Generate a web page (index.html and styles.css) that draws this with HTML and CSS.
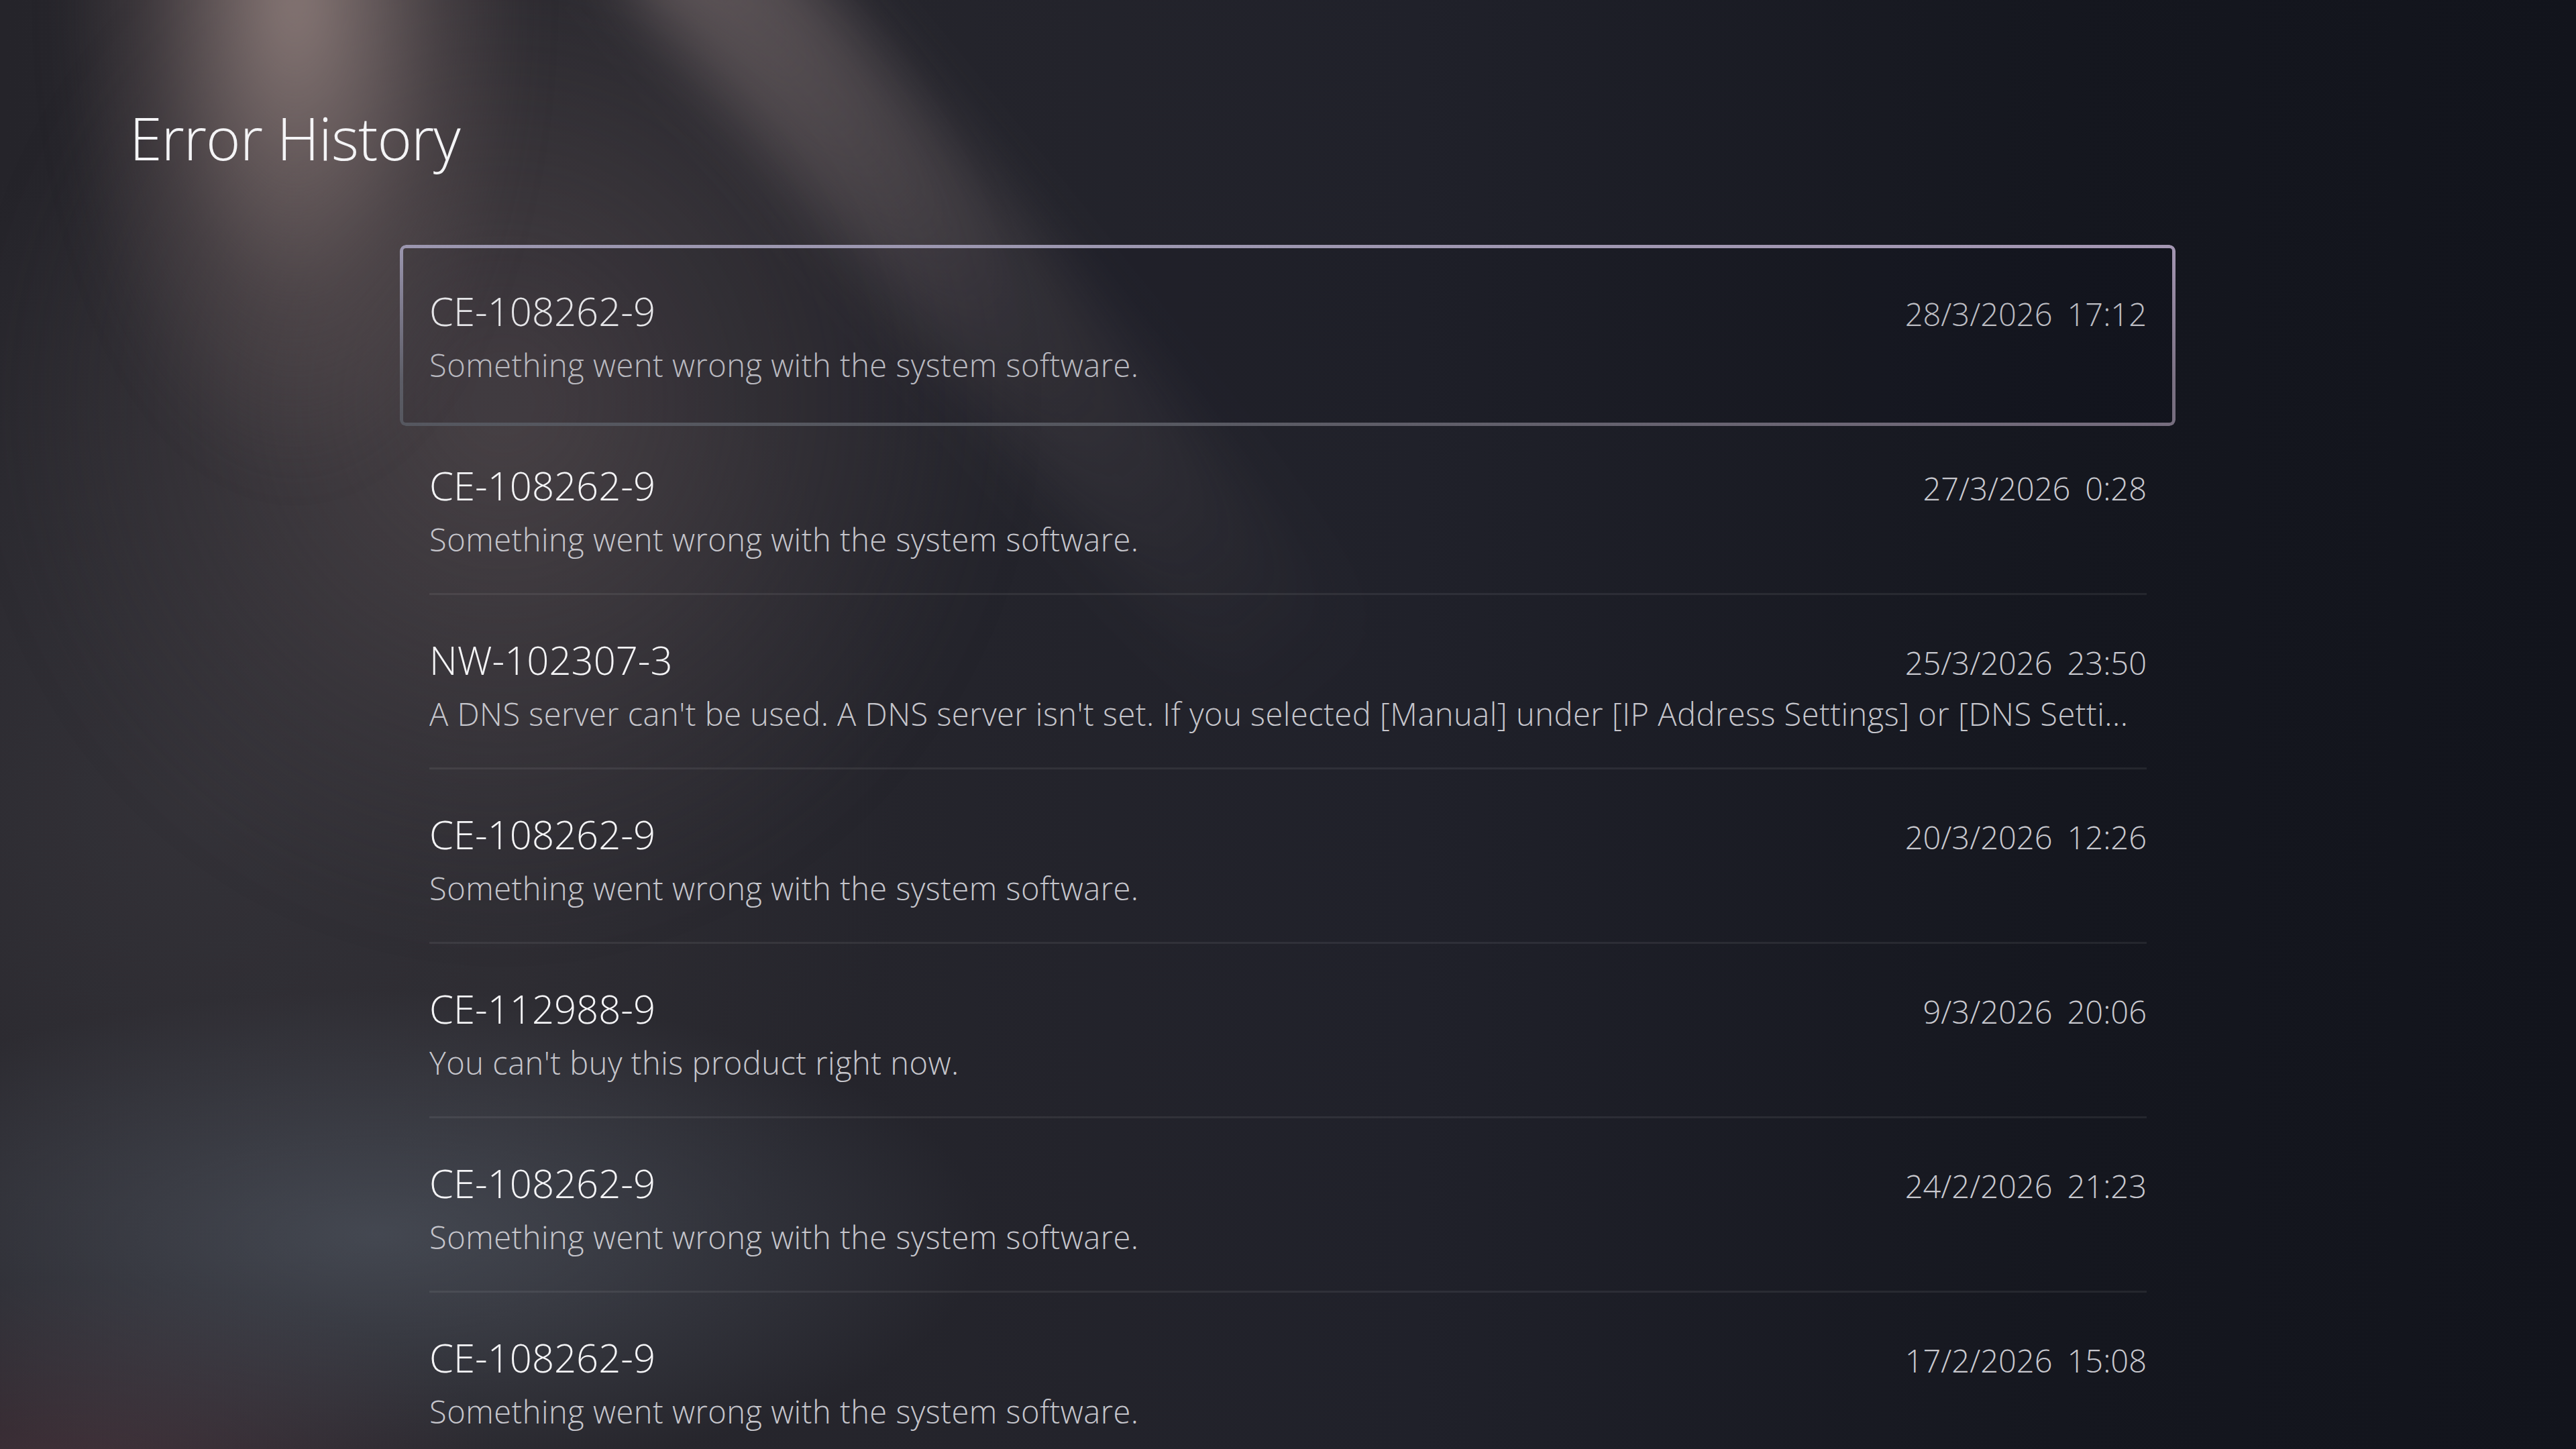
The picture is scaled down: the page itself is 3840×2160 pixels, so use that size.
FILE: index.html
```html
<!DOCTYPE html>
<html lang="en">
<head>
    <meta charset="UTF-8">
    <meta name="viewport" content="width=device-width, initial-scale=1.0">
    <title>Error History</title>
    <link rel="stylesheet" href="styles.css">
</head>
<body>
    <div class="backdrop">
        <span class="beam beam-wide"></span>
        <span class="beam beam-main"></span>
        <span class="beam beam-streak"></span>
    </div>
    <header>
        <h1>Error History</h1>
    </header>
    <main>
        <ul class="error-list">
            <li class="error-item focused">
                <div class="error-body">
                    <div class="error-head">
                        <span class="error-code">CE-108262-9</span>
                        <span class="error-date">28/3/2026<span class="time">17:12</span></span>
                    </div>
                    <p class="error-text">Something went wrong with the system software.</p>
                </div>
            </li>
            <li class="error-item">
                <div class="error-body">
                    <div class="error-head">
                        <span class="error-code">CE-108262-9</span>
                        <span class="error-date">27/3/2026<span class="time">0:28</span></span>
                    </div>
                    <p class="error-text">Something went wrong with the system software.</p>
                </div>
            </li>
            <li class="error-item">
                <div class="error-body">
                    <div class="error-head">
                        <span class="error-code">NW-102307-3</span>
                        <span class="error-date">25/3/2026<span class="time">23:50</span></span>
                    </div>
                    <p class="error-text">A DNS server can't be used. A DNS server isn't set. If you selected [Manual] under [IP Address Settings] or [DNS Setti...</p>
                </div>
            </li>
            <li class="error-item">
                <div class="error-body">
                    <div class="error-head">
                        <span class="error-code">CE-108262-9</span>
                        <span class="error-date">20/3/2026<span class="time">12:26</span></span>
                    </div>
                    <p class="error-text">Something went wrong with the system software.</p>
                </div>
            </li>
            <li class="error-item">
                <div class="error-body">
                    <div class="error-head">
                        <span class="error-code">CE-112988-9</span>
                        <span class="error-date">9/3/2026<span class="time">20:06</span></span>
                    </div>
                    <p class="error-text">You can't buy this product right now.</p>
                </div>
            </li>
            <li class="error-item">
                <div class="error-body">
                    <div class="error-head">
                        <span class="error-code">CE-108262-9</span>
                        <span class="error-date">24/2/2026<span class="time">21:23</span></span>
                    </div>
                    <p class="error-text">Something went wrong with the system software.</p>
                </div>
            </li>
            <li class="error-item">
                <div class="error-body">
                    <div class="error-head">
                        <span class="error-code">CE-108262-9</span>
                        <span class="error-date">17/2/2026<span class="time">15:08</span></span>
                    </div>
                    <p class="error-text">Something went wrong with the system software.</p>
                </div>
            </li>
        </ul>
    </main>
</body>
</html>
```

FILE: styles.css
```css
/* General Styles */
html, body {
    margin: 0;
    padding: 0;
    height: 100%;
}

body {
    position: relative;
    overflow: hidden;
    font-family: 'Open Sans', 'Noto Sans', sans-serif;
    font-weight: 300;
    color: #f2f2f4;
    background:
        radial-gradient(ellipse 1300px 520px at 560px 1840px, rgba(88, 96, 108, 0.55), transparent 70%),
        radial-gradient(ellipse 900px 420px at 120px 2200px, rgba(92, 62, 72, 0.5), transparent 70%),
        radial-gradient(ellipse 1400px 1300px at 300px 1200px, rgba(62, 60, 66, 0.55), transparent 75%),
        linear-gradient(to right, #25242a 0%, #28272d 20%, #20212a 55%, #15171f 80%, #12141c 100%);
}

/* Light beams behind the content */
.backdrop {
    position: absolute;
    inset: 0;
    pointer-events: none;
    overflow: hidden;
}

.beam {
    position: absolute;
    display: block;
}

.beam-main {
    left: 0;
    top: -500px;
    width: 880px;
    height: 1800px;
    background: radial-gradient(ellipse 50% 50% at 50% 28%, rgba(160, 140, 136, 0.8), rgba(120, 104, 104, 0.3) 50%, transparent 80%);
    filter: blur(30px);
}

.beam-wide {
    left: -200px;
    top: -300px;
    width: 1900px;
    height: 2000px;
    background: radial-gradient(ellipse 50% 50% at 50% 45%, rgba(100, 88, 90, 0.5), rgba(80, 72, 76, 0.2) 55%, transparent 80%);
    filter: blur(40px);
}

.beam-streak {
    left: 890px;
    top: -120px;
    width: 220px;
    height: 1500px;
    background: linear-gradient(to bottom, rgba(160, 142, 140, 0.45), rgba(120, 108, 110, 0.2) 55%, transparent);
    transform: rotate(-40deg);
    transform-origin: top center;
    filter: blur(45px);
}

/* Header */
header {
    position: relative;
    padding: 161px 0 0 193px;
}

h1 {
    margin: 0;
    font-size: 88px;
    line-height: 88px;
    font-weight: 300;
    letter-spacing: -1px;
    color: #f4f4f6;
}

/* List */
main {
    position: relative;
    padding: 118px 0 0 597px;
}

.error-list {
    list-style: none;
    margin: 0;
    padding: 0;
    width: 2646px;
}

.error-item {
    position: relative;
    height: 260px;
    padding: 0 43px;
    box-sizing: border-box;
}

.error-body {
    height: 100%;
    box-sizing: border-box;
    padding-top: 68px;
    border-bottom: 3px solid rgba(255, 255, 255, 0.07);
}

.error-item.focused .error-body {
    border-bottom-color: transparent;
}

.error-item.focused::before {
    content: "";
    position: absolute;
    top: -2px;
    left: -1px;
    right: 0;
    bottom: -8px;
    border-radius: 9px;
    background: rgba(8, 8, 16, 0.06);
}

.error-item.focused::after {
    content: "";
    position: absolute;
    top: -2px;
    left: -1px;
    right: 0;
    bottom: -8px;
    padding: 5px;
    border-radius: 9px;
    background:
        linear-gradient(to right, rgba(160, 150, 185, 0) 40%, rgba(180, 150, 185, 0.35) 100%),
        linear-gradient(to bottom, #9c97b0 0%, #7d7a8c 35%, #5c5d66 75%, #55575f 100%);
    -webkit-mask: linear-gradient(#000 0 0) content-box, linear-gradient(#000 0 0);
    -webkit-mask-composite: xor;
    mask-composite: exclude;
}

.error-head {
    display: flex;
    justify-content: space-between;
    align-items: baseline;
}

.error-code {
    font-size: 58px;
    line-height: 58px;
    color: #f4f4f6;
}

.error-date {
    font-size: 47px;
    line-height: 58px;
    color: #c9c9cf;
}

.time {
    margin-left: 22px;
}

.error-text {
    margin: 15px 0 0;
    font-size: 47px;
    line-height: 64px;
    letter-spacing: 0.5px;
    color: #c6c6cc;
    white-space: nowrap;
    overflow: hidden;
    text-overflow: ellipsis;
}
```
